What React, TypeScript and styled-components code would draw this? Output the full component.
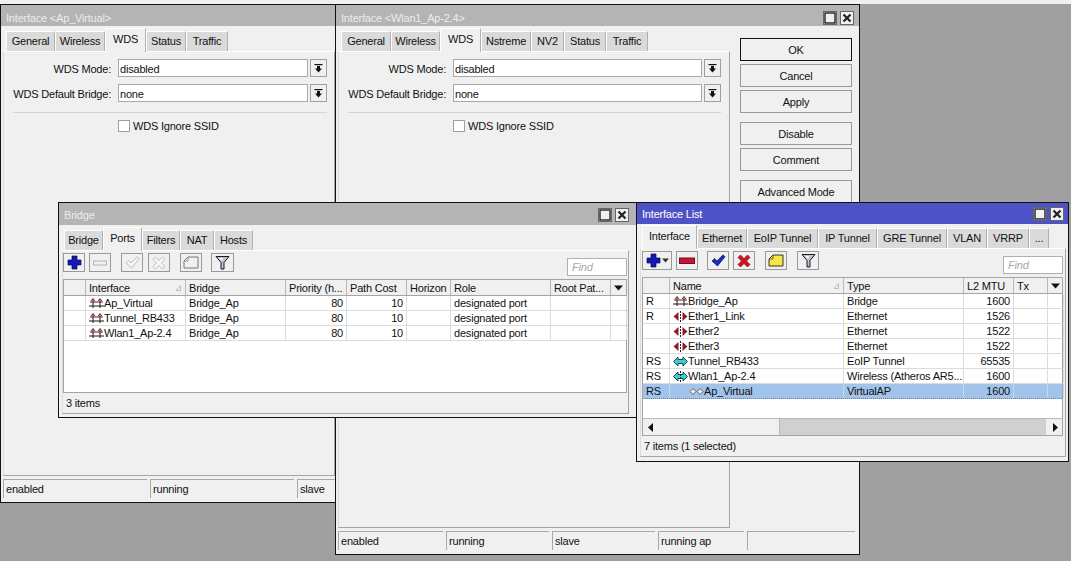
import React from "react";
import styled, { createGlobalStyle } from "styled-components";

const Global = createGlobalStyle`
  html, body {
    margin: 0;
    padding: 0;
    background: #a0a0a0;
  }
  #root {
    width: 1071px;
    height: 561px;
    overflow: hidden;
  }
`;

const Desktop = styled.div`
  position: relative;
  width: 1071px;
  height: 561px;
  overflow: hidden;
  background: linear-gradient(#f0f0f0 4px, #a0a0a0 4px);
  font-family: "Liberation Sans", Arial, sans-serif;
  font-size: 11px;
  letter-spacing: -0.2px;
  color: #111;
`;

const Win = styled.div<{ $x: number; $y: number; $w: number; $h: number }>`
  position: absolute;
  left: ${(p) => p.$x}px;
  top: ${(p) => p.$y}px;
  width: ${(p) => p.$w}px;
  height: ${(p) => p.$h}px;
  box-sizing: border-box;
  display: flex;
  flex-direction: column;
  background: #f0f0f0;
  border: 1px solid #111;
  overflow: hidden;
`;

const TitleBar = styled.div<{ $active?: boolean; $h: number; $top: number; $right: number }>`
  flex: none;
  height: ${(p) => p.$h}px;
  box-sizing: border-box;
  display: flex;
  align-items: center;
  justify-content: space-between;
  padding: ${(p) => p.$top}px ${(p) => p.$right}px 0 5px;
  background: ${(p) => (p.$active ? "#4f51c6" : "#b4b4b4")};
  color: ${(p) => (p.$active ? "#fff" : "#ececec")};
`;

const TitleControls = styled.div`
  display: flex;
  gap: 3px;
`;

const TitleButton = styled.div`
  width: 14px;
  height: 14px;
  box-sizing: border-box;
  display: flex;
  align-items: center;
  justify-content: center;
  background: #f0f0f0;
  border: 1px solid #666;
`;

const Body = styled.div<{ $pad: string }>`
  flex: 1;
  min-height: 0;
  display: flex;
  flex-direction: column;
  padding: ${(p) => p.$pad};
`;

const SplitRow = styled.div`
  flex: 1;
  min-height: 0;
  display: flex;
`;

const TabColumn = styled.div<{ $w: number }>`
  flex: none;
  width: ${(p) => p.$w}px;
  display: flex;
  flex-direction: column;
`;

const TabRow = styled.div<{ $inset: number }>`
  flex: none;
  height: 22px;
  display: flex;
  align-items: flex-end;
  padding-left: ${(p) => p.$inset}px;
  position: relative;
  z-index: 1;
`;

const Tab = styled.div<{ $w: number; $on?: boolean }>`
  flex: none;
  width: ${(p) => p.$w}px;
  height: ${(p) => (p.$on ? 24 : 20)}px;
  margin-bottom: ${(p) => (p.$on ? -1 : 0)}px;
  padding-bottom: ${(p) => (p.$on ? 3 : 1)}px;
  box-sizing: border-box;
  display: flex;
  align-items: center;
  justify-content: center;
  white-space: nowrap;
  background: ${(p) => (p.$on ? "#f0f0f0" : "#dadada")};
  border-top: 1px solid #fff;
  border-left: 1px solid #fff;
  border-right: 1px solid #b0b0b0;
`;

const Panel = styled.div`
  flex: 1;
  min-height: 0;
  box-sizing: border-box;
  display: flex;
  flex-direction: column;
  border: 1px solid;
  border-color: #fff #a4a4a4 #a4a4a4 #dcdcdc;
`;

const FormPanel = styled(Panel)<{ $right: number }>`
  padding: 7px ${(p) => p.$right}px 0 9px;
`;

const FormRow = styled.div`
  display: flex;
  align-items: center;
  height: 18px;
  margin-bottom: 7px;
`;

const FieldLabel = styled.div`
  flex: none;
  width: 98px;
  margin-right: 7px;
  padding-top: 1px;
  text-align: right;
  white-space: nowrap;
`;

const Field = styled.div`
  flex: 1;
  height: 18px;
  box-sizing: border-box;
  padding-left: 1px;
  line-height: 18px;
  background: #fff;
  border: 1px solid #a8a8a8;
`;

const DropButton = styled.div`
  flex: none;
  width: 17px;
  height: 18px;
  margin-left: 2px;
  box-sizing: border-box;
  display: flex;
  align-items: center;
  justify-content: center;
  background: #f0f0f0;
  border: 1px solid #a0a0a0;
`;

const Separator = styled.div`
  height: 1px;
  margin: 3px 0 7px;
  background: #d4d4d4;
`;

const CheckRow = styled.div`
  display: flex;
  align-items: center;
  padding-left: 105px;
  gap: 3px;
`;

const CheckBox = styled.div`
  width: 12px;
  height: 12px;
  box-sizing: border-box;
  background: #fff;
  border: 1px solid #a0a0a0;
`;

const ButtonColumn = styled.div`
  flex: none;
  width: 112px;
  margin: 9px 0 0 10px;
  display: flex;
  flex-direction: column;
`;

const ActionButton = styled.div<{ $top?: number; $primary?: boolean }>`
  flex: none;
  height: 23px;
  margin-top: ${(p) => p.$top ?? 3}px;
  box-sizing: border-box;
  display: flex;
  align-items: center;
  justify-content: center;
  background: #f0f0f0;
  border: 1px solid ${(p) => (p.$primary ? "#111" : "#999")};
`;

const StatusRow = styled.div`
  flex: none;
  height: 19px;
  margin-top: 3px;
  display: flex;
  gap: 3px;
`;

const StatusCell = styled.div<{ $w: number }>`
  flex: none;
  width: ${(p) => p.$w}px;
  box-sizing: border-box;
  padding-left: 2px;
  line-height: 18px;
  border-top: 1px solid #a8a8a8;
  border-left: 1px solid #a8a8a8;
`;

const Toolbar = styled.div<{ $left: number; $right: number }>`
  flex: none;
  height: 26px;
  margin-top: 2px;
  padding: 0 ${(p) => p.$right}px 0 ${(p) => p.$left}px;
  display: flex;
  align-items: flex-start;
`;

const ToolButton = styled.div<{ $w?: number; $gap?: number }>`
  flex: none;
  width: ${(p) => p.$w ?? 22}px;
  height: 19px;
  margin-left: ${(p) => p.$gap ?? 0}px;
  box-sizing: border-box;
  display: flex;
  align-items: center;
  justify-content: center;
  gap: 1px;
  background: #f0f0f0;
  border: 1px solid #999;
`;

const FindBox = styled.div`
  flex: none;
  width: 60px;
  height: 18px;
  margin: 5px 0 0 auto;
  box-sizing: border-box;
  padding-left: 4px;
  line-height: 17px;
  font-style: italic;
  color: #a8a8a8;
  background: #fff;
  border: 1px solid #b0b0b0;
`;

const Table = styled.div<{ $left: number; $right: number }>`
  flex: 1;
  min-height: 0;
  margin: 0 ${(p) => p.$right}px 0 ${(p) => p.$left}px;
  display: flex;
  flex-direction: column;
  background: #fff;
  border: 1px solid #a4a4a4;
`;

const TableBody = styled.div`
  flex: 1;
  min-height: 0;
`;

const HeaderRow = styled.div<{ $cols: string }>`
  flex: none;
  display: grid;
  grid-template-columns: ${(p) => p.$cols};
  height: 16px;
  box-sizing: border-box;
  background: #f0f0f0;
  border-bottom: 1px solid #a4a4a4;
`;

const HeadCell = styled.div<{ $last?: boolean }>`
  display: flex;
  align-items: center;
  justify-content: space-between;
  padding: 0 3px;
  white-space: nowrap;
  overflow: hidden;
  box-sizing: border-box;
  border-right: ${(p) => (p.$last ? "none" : "1px solid #b8b8b8")};
`;

const DataRow = styled.div<{ $cols: string; $sel?: boolean }>`
  display: grid;
  grid-template-columns: ${(p) => p.$cols};
  height: 15px;
  box-sizing: border-box;
  background: ${(p) => (p.$sel ? "#a2c3ea" : "#fff")};
  border-bottom: 1px ${(p) => (p.$sel ? "dotted #6c7f98" : "solid #dcdcdc")};
`;

const DataCell = styled.div<{ $num?: boolean; $indent?: number; $sel?: boolean }>`
  display: flex;
  align-items: center;
  justify-content: ${(p) => (p.$num ? "flex-end" : "flex-start")};
  padding: 0 3px 0 ${(p) => 3 + (p.$indent ?? 0)}px;
  white-space: nowrap;
  overflow: hidden;
  box-sizing: border-box;
  border-right: 1px solid ${(p) => (p.$sel ? "#c4d8f0" : "#dcdcdc")};
`;

const ScrollBar = styled.div`
  flex: none;
  height: 16px;
  display: flex;
  background: #d0d0d0;
  border-top: 1px solid #b8b8b8;
`;

const ScrollArrow = styled.div`
  flex: none;
  width: 16px;
  display: flex;
  align-items: center;
  justify-content: center;
  background: #f0f0f0;
`;

const ScrollThumb = styled.div`
  flex: none;
  width: 120px;
  background: #f0f0f0;
  border-right: 1px solid #b8b8b8;
`;

const ScrollTrack = styled.div`
  flex: 1;
`;

const PanelFooter = styled.div`
  flex: none;
  height: 20px;
  padding-left: 3px;
  line-height: 21px;
`;

const MaxIcon = () => (
  <svg width="12" height="12" viewBox="0 0 12 12">
    <rect x="1" y="1" width="10" height="10" fill="none" stroke="#222" strokeWidth="1.4" />
  </svg>
);

const CloseIcon = () => (
  <svg width="12" height="12" viewBox="0 0 12 12">
    <path d="M2.5 2.5l7 7M9.5 2.5l-7 7" stroke="#222" strokeWidth="2.2" />
  </svg>
);

const DropIcon = () => (
  <svg width="11" height="11" viewBox="0 0 11 11">
    <rect x="1.5" y="1" width="8" height="1.2" fill="#111" />
    <path d="M4 3h3v2.5h2L5.5 9.5 2 5.5h2z" fill="#111" />
  </svg>
);

const PlusIcon = () => (
  <svg width="15" height="15" viewBox="0 0 15 15">
    <path d="M5 1h5v4h4v5h-4v4H5v-4H1V5h4z" fill="#1418b4" stroke="#070a50" strokeWidth=".7" />
  </svg>
);

const Caret = () => (
  <svg width="7" height="5" viewBox="0 0 7 5">
    <path d="M0 .5h7L3.5 4.5z" fill="#333" />
  </svg>
);

const MinusIcon = ({ off }: { off?: boolean }) => (
  <svg width="16" height="8" viewBox="0 0 16 8">
    <rect
      x={off ? 1.5 : 0.5}
      y={off ? 2 : 1}
      width={off ? 13 : 15}
      height={off ? 4 : 5.5}
      fill={off ? "#efefef" : "#cf1030"}
      stroke={off ? "#b4b4b4" : "#6a1020"}
    />
  </svg>
);

const CheckIcon = ({ off }: { off?: boolean }) => (
  <svg width="15" height="13" viewBox="0 0 15 13">
    <path
      d="M1 7l2.5-2.5 2.5 2.5 6-6.2 2 2L6.5 12z"
      fill={off ? "#f6f6f6" : "#1a2cb8"}
      stroke={off ? "#a8a8a8" : "#0a1260"}
      strokeWidth=".7"
    />
  </svg>
);

const CrossIcon = ({ off }: { off?: boolean }) => (
  <svg width="14" height="14" viewBox="0 0 14 14">
    <path
      d="M1 3.5L3.5 1 7 4.5 10.5 1 13 3.5 9.5 7l3.5 3.5-2.5 2.5L7 9.5 3.5 13 1 10.5 4.5 7z"
      fill={off ? "#f6f6f6" : "#d2141e"}
      stroke={off ? "#a8a8a8" : "#701016"}
      strokeWidth=".7"
    />
  </svg>
);

const NoteIcon = ({ off }: { off?: boolean }) => (
  <svg width="16" height="13" viewBox="0 0 16 13">
    <path
      d="M1 5l4-4h10v11H1z"
      fill={off ? "#f0f0f0" : "#f8e640"}
      stroke={off ? "#777" : "#333"}
    />
    <path d="M1 5h4V1" fill="none" stroke={off ? "#777" : "#333"} strokeWidth=".7" />
  </svg>
);

const FilterIcon = () => (
  <svg width="15" height="15" viewBox="0 0 15 15">
    <path d="M1 1.5h13L9 7.5V14H6V7.5z" fill="#b8c2d0" stroke="#1c1c1c" />
    <path d="M4 3h4l-1 3z" fill="#fff" />
  </svg>
);

const SortMark = () => (
  <svg width="6" height="6" viewBox="0 0 6 6">
    <path d="M0 5.5L4.5 .5v5z" fill="none" stroke="#bbb" />
  </svg>
);

const ColumnMenu = () => (
  <svg width="9" height="6" viewBox="0 0 9 6">
    <path d="M0 .5h9L4.5 5.5z" fill="#111" />
  </svg>
);

const ArrowIcon = ({ right }: { right?: boolean }) => (
  <svg width="7" height="9" viewBox="0 0 7 9">
    <path d={right ? "M2 0l5 4.5L2 9z" : "M5 0L0 4.5 5 9z"} fill="#111" />
  </svg>
);

const BridgeGlyph = () => (
  <svg width="15" height="11" viewBox="0 0 15 11">
    <path d="M4 1v9M11 1v9" stroke="#1a1a1a" />
    <path d="M1 4h13" stroke="#6a1420" />
    <path d="M0 8h15" stroke="#1a1a1a" />
    <path d="M2 3l2-2.5L6 3M9 3l2-2.5L13 3" fill="none" stroke="#6a1420" strokeWidth=".9" />
  </svg>
);

const EtherGlyph = () => (
  <svg width="15" height="11" viewBox="0 0 15 11">
    <path d="M0.5 5.5L5.5 1v9z" fill="#8c1c2c" />
    <path d="M14.5 5.5L9.5 1v9z" fill="#8c1c2c" />
    <path d="M7.5 0v11" stroke="#222" strokeDasharray="2 1" />
  </svg>
);

const TunnelGlyph = ({ dashed }: { dashed?: boolean }) => (
  <svg width="15" height="11" viewBox="0 0 15 11">
    <path
      d="M.5 5.5L5 1v2.5h5V1l4.5 4.5L10 10V7.5H5V10z"
      fill="#40cfd0"
      stroke="#063a40"
      strokeWidth=".9"
    />
    {dashed && <path d="M7.5 0v11" stroke="#222" strokeDasharray="2 1" />}
  </svg>
);

const VirtualGlyph = () => (
  <svg width="15" height="11" viewBox="0 0 15 11">
    <path d="M1 5.5l3-3 3 3-3 3z" fill="#eee" stroke="#444" strokeWidth=".8" />
    <path d="M8 5.5l3-3 3 3-3 3z" fill="#eee" stroke="#444" strokeWidth=".8" />
  </svg>
);

const WinControls = () => (
  <TitleControls>
    <TitleButton>
      <MaxIcon />
    </TitleButton>
    <TitleButton>
      <CloseIcon />
    </TitleButton>
  </TitleControls>
);

const WdsForm = ({ right }: { right: number }) => (
  <FormPanel $right={right}>
    <FormRow>
      <FieldLabel>WDS Mode:</FieldLabel>
      <Field>disabled</Field>
      <DropButton>
        <DropIcon />
      </DropButton>
    </FormRow>
    <FormRow>
      <FieldLabel>WDS Default Bridge:</FieldLabel>
      <Field>none</Field>
      <DropButton>
        <DropIcon />
      </DropButton>
    </FormRow>
    <Separator />
    <CheckRow>
      <CheckBox />
      <span>WDS Ignore SSID</span>
    </CheckRow>
  </FormPanel>
);

const bridgeCols = "22px 100px 100px 61px 60px 44px 100px 60px 16px";
const bridgeRows = ["Ap_Virtual", "Tunnel_RB433", "Wlan1_Ap-2.4"];

const listCols = "27px 174px 120px 50px 34px 16px";
const listRows = [
  { flag: "R", name: "Bridge_Ap", glyph: <BridgeGlyph />, type: "Bridge", mtu: "1600" },
  { flag: "R", name: "Ether1_Link", glyph: <EtherGlyph />, type: "Ethernet", mtu: "1526" },
  { flag: "", name: "Ether2", glyph: <EtherGlyph />, type: "Ethernet", mtu: "1522" },
  { flag: "", name: "Ether3", glyph: <EtherGlyph />, type: "Ethernet", mtu: "1522" },
  { flag: "RS", name: "Tunnel_RB433", glyph: <TunnelGlyph />, type: "EoIP Tunnel", mtu: "65535" },
  { flag: "RS", name: "Wlan1_Ap-2.4", glyph: <TunnelGlyph dashed />, type: "Wireless (Atheros AR5...", mtu: "1600" },
  { flag: "RS", name: "Ap_Virtual", glyph: <VirtualGlyph />, type: "VirtualAP", mtu: "1600", sel: true },
];

export default function App() {
  return (
    <Desktop>
      <Global />

      <Win $x={0} $y={4} $w={338} $h={499}>
        <TitleBar $h={21} $top={5} $right={4}>
          <span>Interface &lt;Ap_Virtual&gt;</span>
        </TitleBar>
        <Body $pad="3px 2px 4px">
          <TabRow $inset={3}>
            <Tab $w={49}>General</Tab>
            <Tab $w={50}>Wireless</Tab>
            <Tab $w={41} $on>WDS</Tab>
            <Tab $w={40}>Status</Tab>
            <Tab $w={42}>Traffic</Tab>
          </TabRow>
          <WdsForm right={7} />
          <StatusRow>
            <StatusCell $w={144}>enabled</StatusCell>
            <StatusCell $w={144}>running</StatusCell>
            <StatusCell $w={40}>slave</StatusCell>
          </StatusRow>
        </Body>
      </Win>

      <Win $x={335} $y={4} $w={525} $h={551}>
        <TitleBar $h={21} $top={5} $right={5}>
          <span>Interface &lt;Wlan1_Ap-2.4&gt;</span>
          <WinControls />
        </TitleBar>
        <Body $pad="3px 2px 4px">
          <SplitRow>
            <TabColumn $w={392}>
              <TabRow $inset={3}>
                <Tab $w={50}>General</Tab>
                <Tab $w={49}>Wireless</Tab>
                <Tab $w={41} $on>WDS</Tab>
                <Tab $w={50}>Nstreme</Tab>
                <Tab $w={33}>NV2</Tab>
                <Tab $w={42}>Status</Tab>
                <Tab $w={42}>Traffic</Tab>
              </TabRow>
              <WdsForm right={8} />
            </TabColumn>
            <ButtonColumn>
              <ActionButton $top={0} $primary>OK</ActionButton>
              <ActionButton>Cancel</ActionButton>
              <ActionButton>Apply</ActionButton>
              <ActionButton $top={9}>Disable</ActionButton>
              <ActionButton>Comment</ActionButton>
              <ActionButton $top={9}>Advanced Mode</ActionButton>
            </ButtonColumn>
          </SplitRow>
          <StatusRow>
            <StatusCell $w={105}>enabled</StatusCell>
            <StatusCell $w={103}>running</StatusCell>
            <StatusCell $w={103}>slave</StatusCell>
            <StatusCell $w={86}>running ap</StatusCell>
            <StatusCell $w={108} />
          </StatusRow>
        </Body>
      </Win>

      <Win $x={58} $y={202} $w={579} $h={216}>
        <TitleBar $h={22} $top={1} $right={7}>
          <span>Bridge</span>
          <WinControls />
        </TitleBar>
        <Body $pad="3px 7px 3px 3px">
          <TabRow $inset={2}>
            <Tab $w={39}>Bridge</Tab>
            <Tab $w={39} $on>Ports</Tab>
            <Tab $w={38}>Filters</Tab>
            <Tab $w={34}>NAT</Tab>
            <Tab $w={39}>Hosts</Tab>
          </TabRow>
          <Panel>
            <Toolbar $left={0} $right={1}>
              <ToolButton>
                <PlusIcon />
              </ToolButton>
              <ToolButton $gap={4}>
                <MinusIcon off />
              </ToolButton>
              <ToolButton $gap={10}>
                <CheckIcon off />
              </ToolButton>
              <ToolButton $gap={5}>
                <CrossIcon off />
              </ToolButton>
              <ToolButton $gap={10}>
                <NoteIcon off />
              </ToolButton>
              <ToolButton $gap={9} $w={23}>
                <FilterIcon />
              </ToolButton>
              <FindBox>Find</FindBox>
            </Toolbar>
            <Table $left={0} $right={1}>
              <HeaderRow $cols={bridgeCols}>
                <HeadCell />
                <HeadCell>
                  Interface
                  <SortMark />
                </HeadCell>
                <HeadCell>Bridge</HeadCell>
                <HeadCell>Priority (h...</HeadCell>
                <HeadCell>Path Cost</HeadCell>
                <HeadCell>Horizon</HeadCell>
                <HeadCell>Role</HeadCell>
                <HeadCell>Root Pat...</HeadCell>
                <HeadCell $last>
                  <ColumnMenu />
                </HeadCell>
              </HeaderRow>
              <TableBody>
                {bridgeRows.map((name) => (
                  <DataRow key={name} $cols={bridgeCols}>
                    <DataCell />
                    <DataCell>
                      <BridgeGlyph />
                      {name}
                    </DataCell>
                    <DataCell>Bridge_Ap</DataCell>
                    <DataCell $num>80</DataCell>
                    <DataCell $num>10</DataCell>
                    <DataCell />
                    <DataCell>designated port</DataCell>
                    <DataCell />
                    <DataCell />
                  </DataRow>
                ))}
              </TableBody>
            </Table>
            <PanelFooter>3 items</PanelFooter>
          </Panel>
        </Body>
      </Win>

      <Win $x={636} $y={202} $w={433} $h={260}>
        <TitleBar $active $h={21} $top={0} $right={4}>
          <span>Interface List</span>
          <WinControls />
        </TitleBar>
        <Body $pad="2px 2px 4px 3px">
          <TabRow $inset={2}>
            <Tab $w={55} $on>Interface</Tab>
            <Tab $w={50}>Ethernet</Tab>
            <Tab $w={71}>EoIP Tunnel</Tab>
            <Tab $w={59}>IP Tunnel</Tab>
            <Tab $w={70}>GRE Tunnel</Tab>
            <Tab $w={40}>VLAN</Tab>
            <Tab $w={42}>VRRP</Tab>
            <Tab $w={20}>...</Tab>
          </TabRow>
          <Panel>
            <Toolbar $left={1} $right={2}>
              <ToolButton $w={30}>
                <PlusIcon />
                <Caret />
              </ToolButton>
              <ToolButton $gap={4}>
                <MinusIcon />
              </ToolButton>
              <ToolButton $gap={9}>
                <CheckIcon />
              </ToolButton>
              <ToolButton $gap={4}>
                <CrossIcon />
              </ToolButton>
              <ToolButton $gap={10}>
                <NoteIcon />
              </ToolButton>
              <ToolButton $gap={10}>
                <FilterIcon />
              </ToolButton>
              <FindBox>Find</FindBox>
            </Toolbar>
            <Table $left={1} $right={2}>
              <HeaderRow $cols={listCols}>
                <HeadCell />
                <HeadCell>
                  Name
                  <SortMark />
                </HeadCell>
                <HeadCell>Type</HeadCell>
                <HeadCell>L2 MTU</HeadCell>
                <HeadCell>Tx</HeadCell>
                <HeadCell $last>
                  <ColumnMenu />
                </HeadCell>
              </HeaderRow>
              <TableBody>
                {listRows.map((row) => (
                  <DataRow key={row.name} $cols={listCols} $sel={row.sel}>
                    <DataCell $sel={row.sel}>{row.flag}</DataCell>
                    <DataCell $sel={row.sel} $indent={row.sel ? 16 : 0}>
                      {row.glyph}
                      {row.name}
                    </DataCell>
                    <DataCell $sel={row.sel}>{row.type}</DataCell>
                    <DataCell $sel={row.sel} $num>
                      {row.mtu}
                    </DataCell>
                    <DataCell $sel={row.sel} />
                    <DataCell $sel={row.sel} />
                  </DataRow>
                ))}
              </TableBody>
              <ScrollBar>
                <ScrollArrow>
                  <ArrowIcon />
                </ScrollArrow>
                <ScrollThumb />
                <ScrollTrack />
                <ScrollArrow>
                  <ArrowIcon right />
                </ScrollArrow>
              </ScrollBar>
            </Table>
            <PanelFooter>7 items (1 selected)</PanelFooter>
          </Panel>
        </Body>
      </Win>
    </Desktop>
  );
}
